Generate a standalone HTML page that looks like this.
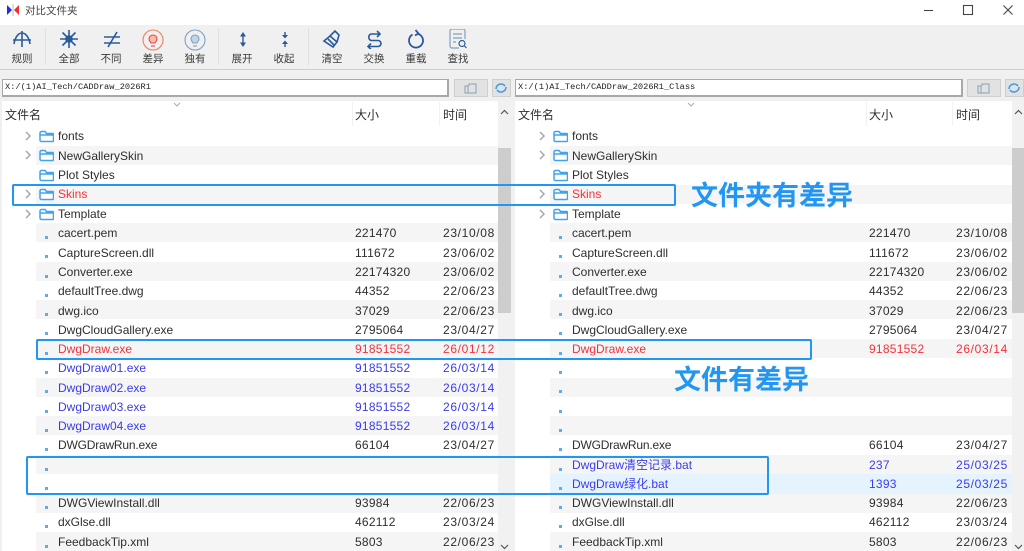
<!DOCTYPE html>
<html><head><meta charset="utf-8"><title>对比文件夹</title>
<style>
html,body{margin:0;padding:0;background:#fff}
body{width:1024px;height:551px;overflow:hidden;position:relative;font-family:"Liberation Sans","Noto Sans CJK SC",sans-serif;font-size:12px;color:#2e2e2e;filter:blur(.3px)}
div,span,svg{position:absolute}
.tb{left:0;top:25px;width:1024px;height:44px;background:#f0f0f0;border-bottom:1px solid #cfcfcf}
.l{top:51.500px;width:40px;text-align:center;font-size:10.5px;color:#3a3a3a;line-height:14px}
.sep{top:28px;width:1px;height:37px;background:#e0e0e0}
.ic{top:29px;width:20px;height:20px;fill:none;stroke:#2a5a9a;stroke-width:1.6}
.bar{left:0;top:70px;width:1024px;height:31px;background:#f0f0f0}
.in{top:79px;height:15px;background:#fff;border:1px solid #a8a8a8;border-right-width:2px;border-bottom-width:2px;font:8.7px/15px "Liberation Mono",monospace;color:#222;padding-left:2px;white-space:nowrap;overflow:hidden}
.b1{top:79px;width:32px;height:16px;background:#e2e2e2;border:1px solid #cfcfcf}
.b2{top:79px;width:17px;height:16px;background:#e2e2e2;border:1px solid #cfcfcf}
.h{top:107px;line-height:16px;font-size:12px;color:#2e2e2e}
.st{height:19.3px;background:#f5f5f5}
.t{line-height:16px;white-space:nowrap;font-size:12px;color:#2e2e2e}
.t[style*="left:355px"],.t[style*="left:869px"]{letter-spacing:.25px}
.t[style*="left:443px"],.t[style*="left:956px"]{letter-spacing:.65px}
.t.r{color:#f5303a}.t.b{color:#3a3af0}
.d{width:3px;height:3px;margin-top:.5px;background:#5aaeee}
.f{width:15px;height:13px;fill:#fff;stroke:#43a3ea;stroke-width:1.5}
.c{width:7px;height:10px;fill:none;stroke:#a8a8a8;stroke-width:1.5}
.box{border:2px solid #2196f3;border-radius:2px;box-sizing:border-box}
.big{font-weight:bold;font-size:27px;color:#2196f3;line-height:30px;white-space:nowrap}
.sb{top:101px;width:17px;height:450px;background:#f1f1f1}
.th{top:148px;height:165px;background:#cdcdcd}
</style></head><body>
<svg style="left:6px;top:3px;width:14px;height:14px" viewBox="0 0 14 14"><path d="M1 2l5 5-5 5z" fill="#1f2fe0"/><path d="M13 2L8 7l5 5z" fill="#ef3030"/><path d="M7 1v12" stroke="#bbb" stroke-width="1"/></svg>
<div style="left:25px;top:4px;font-size:10.5px;line-height:14px;color:#444">对比文件夹</div>
<svg style="left:917px;top:3px;width:100px;height:14px" viewBox="0 0 100 14" fill="none" stroke="#444" stroke-width="1.1"><path d="M7 7.500h9"/><rect x="46.500" y="2.500" width="9" height="9"/><path d="M86.500 2.500l9 9M95.500 2.500l-9 9"/></svg>

<div class="tb"></div>
<svg class="ic" style="left:12px" viewBox="0 0 20 20"><path d="M10 2v16M2 15C3 8 6.500 4 10 4s7 4 8 11M1 11h18"/></svg>
<svg class="ic" style="left:59px" viewBox="0 0 20 20"><path d="M10 1v18M1 10h18M3.500 3.500l13 13M16.500 3.500l-13 13"/><circle cx="10" cy="10" r="3" fill="#2a5a9a"/></svg>
<svg class="ic" style="left:102px" viewBox="0 0 20 20"><path d="M2 8h16M2 14h16M15 3L6 18"/></svg>
<svg class="ic" style="left:141px;top:27.500px;width:24px;height:24px;stroke:#f0805a;stroke-width:1.1" viewBox="0 0 24 24"><circle cx="12" cy="12" r="10"/><path d="M8 11a4 4 0 1 1 8 0c0 2-2 3-2 4h-4c0-1-2-2-2-4z" fill="#f7bdaa" stroke="#ee4444"/><path d="M10 18h4" stroke="#ee4444"/></svg>
<svg class="ic" style="left:183px;top:27.500px;width:24px;height:24px;stroke:#7f9fc4;stroke-width:1.1" viewBox="0 0 24 24"><circle cx="12" cy="12" r="10"/><path d="M8 11a4 4 0 1 1 8 0c0 2-2 3-2 4h-4c0-1-2-2-2-4z" fill="#c3d3e8"/><path d="M10 18h4"/></svg>
<svg class="ic" style="left:233px" viewBox="0 0 20 20"><path d="M10 6v9" stroke-width="1.400"/><path d="M7 7.500L10 3l3 4.500zM7 13.500l3 4.500 3-4.500z" fill="#2a5a9a" stroke="none"/></svg>
<svg class="ic" style="left:275px" viewBox="0 0 20 20"><path d="M10 3v3M10 15v3" stroke-width="1.400"/><path d="M7 6l3 3.500L13 6zM7 15l3-3.500L13 15z" fill="#2a5a9a" stroke="none"/></svg>
<svg class="ic" style="left:322px" viewBox="0 0 20 20"><path d="M2 12l6-5 7 6-4 5z"/><path d="M8 7l5-5 4 4-2 7M6 10l6 6"/></svg>
<svg class="ic" style="left:364px" viewBox="0 0 20 20"><path d="M16 5H7a3.500 3.500 0 0 0 0 6.500h7a3 3 0 0 1 0 6H4M13 2l3 3-3 3M7 14.500l-3 3 3 3"/></svg>
<svg class="ic" style="left:406px;stroke-width:1.8" viewBox="0 0 20 20"><path d="M6.500 5.500a7 7 0 1 0 5-.8M9.500 1l3 3.500-3.500 2"/></svg>
<svg class="ic" style="left:448px;stroke:#7f9fc0;stroke-width:1.200" viewBox="0 0 20 20"><path d="M11 19H4a2 2 0 0 1-2-2V2a2 2 0 0 1 2-2h11a2 2 0 0 1 2 2v8M5 5h9M5 9h9M5 13h3"/><circle cx="14" cy="14.500" r="3" stroke="#2a5a9a"/><path d="M16.500 17l2 2" stroke="#2a5a9a"/></svg>
<div class="sep" style="left:45px"></div><div class="sep" style="left:218px"></div><div class="sep" style="left:308px"></div>
<div class="l" style="left:2px">规则</div><div class="l" style="left:49px">全部</div><div class="l" style="left:91px">不同</div><div class="l" style="left:133px">差异</div><div class="l" style="left:175px">独有</div><div class="l" style="left:222px">展开</div><div class="l" style="left:264px">收起</div><div class="l" style="left:312px">清空</div><div class="l" style="left:354px">交换</div><div class="l" style="left:396px">重载</div><div class="l" style="left:438px">查找</div>

<div class="bar"></div>
<div class="in" style="left:2px;width:442px">X:/(1)AI_Tech/CADDraw_2026R1</div>
<div class="b1" style="left:454px"></div>
<svg style="left:464px;top:82px;width:14px;height:12px" viewBox="0 0 14 12" fill="none" stroke="#8aa0b5"><path d="M1 4h3v7H1zM4 11h8V2H5v2"/></svg>
<div class="b2" style="left:492px"></div>
<svg style="left:494px;top:81px;width:14px;height:14px" viewBox="0 0 14 14" fill="none" stroke="#3f9be8" stroke-width="1.6"><path d="M2 8a5 5 0 0 1 9-3M12 6a5 5 0 0 1-9 3"/></svg>
<div class="in" style="left:515px;width:443px">X:/(1)AI_Tech/CADDraw_2026R1_Class</div>
<div class="b1" style="left:967px"></div>
<svg style="left:977px;top:82px;width:14px;height:12px" viewBox="0 0 14 12" fill="none" stroke="#8aa0b5"><path d="M1 4h3v7H1zM4 11h8V2H5v2"/></svg>
<div class="b2" style="left:1005px"></div>
<svg style="left:1007px;top:81px;width:14px;height:14px" viewBox="0 0 14 14" fill="none" stroke="#3f9be8" stroke-width="1.6"><path d="M2 8a5 5 0 0 1 9-3M12 6a5 5 0 0 1-9 3"/></svg>

<div style="left:0;top:101px;width:2px;height:450px;background:#f0f0f0"></div>
<div class="h" style="left:5px">文件名</div><div class="h" style="left:355px">大小</div><div class="h" style="left:443px">时间</div>
<div class="h" style="left:518px">文件名</div><div class="h" style="left:869px">大小</div><div class="h" style="left:956px">时间</div>
<div style="left:352px;top:102px;width:1px;height:24px;background:#f2f2f2"></div><div style="left:439px;top:102px;width:1px;height:24px;background:#f2f2f2"></div>
<div style="left:866px;top:102px;width:1px;height:24px;background:#f2f2f2"></div><div style="left:952px;top:102px;width:1px;height:24px;background:#f2f2f2"></div>
<svg style="left:173px;top:102px;width:8px;height:5px" viewBox="0 0 8 5" fill="none" stroke="#aaa"><path d="M1 1l3 3 3-3"/></svg>
<svg style="left:687px;top:102px;width:8px;height:5px" viewBox="0 0 8 5" fill="none" stroke="#aaa"><path d="M1 1l3 3 3-3"/></svg>

<!-- stripes -->
<div class="st" style="left:36px;top:145.500px;width:462px"></div><div class="st" style="left:550px;top:145.500px;width:462px"></div>
<div class="st" style="left:36px;top:184.500px;width:462px"></div><div class="st" style="left:550px;top:184.500px;width:462px"></div>
<div class="st" style="left:36px;top:223px;width:462px"></div><div class="st" style="left:550px;top:223px;width:462px"></div>
<div class="st" style="left:36px;top:261.500px;width:462px"></div><div class="st" style="left:550px;top:261.500px;width:462px"></div>
<div class="st" style="left:36px;top:300px;width:462px"></div><div class="st" style="left:550px;top:300px;width:462px"></div>
<div class="st" style="left:36px;top:339px;width:462px"></div><div class="st" style="left:550px;top:339px;width:462px"></div>
<div class="st" style="left:36px;top:377.500px;width:462px"></div><div class="st" style="left:550px;top:377.500px;width:462px"></div>
<div class="st" style="left:36px;top:416px;width:462px"></div><div class="st" style="left:550px;top:416px;width:462px"></div>
<div class="st" style="left:36px;top:455px;width:462px"></div><div class="st" style="left:550px;top:455px;width:462px"></div>
<div class="st" style="left:550px;top:474.300px;width:462px;background:#e5f3ff"></div>
<div class="st" style="left:36px;top:493.500px;width:462px"></div><div class="st" style="left:550px;top:493.500px;width:462px"></div>
<div class="st" style="left:36px;top:532px;width:462px"></div><div class="st" style="left:550px;top:532px;width:462px"></div>

<!-- scrollbars -->
<div class="sb" style="left:498px"></div><div class="th" style="left:498px;width:12.500px"></div>
<div class="sb" style="left:1012px;width:12px"></div><div class="th" style="left:1012px;width:12px"></div>
<svg style="left:500px;top:109px;width:9px;height:6px" viewBox="0 0 9 6" fill="none" stroke="#555" stroke-width="1.2"><path d="M1 5l3.500-3.500L8 5"/></svg>
<svg style="left:1014px;top:109px;width:9px;height:6px" viewBox="0 0 9 6" fill="none" stroke="#555" stroke-width="1.2"><path d="M1 5l3.500-3.500L8 5"/></svg>
<svg style="left:500px;top:544px;width:9px;height:6px" viewBox="0 0 9 6" fill="none" stroke="#555" stroke-width="1.2"><path d="M1 1l3.500 3.500L8 1"/></svg>
<svg style="left:1014px;top:544px;width:9px;height:6px" viewBox="0 0 9 6" fill="none" stroke="#555" stroke-width="1.2"><path d="M1 1l3.500 3.500L8 1"/></svg>

<!-- folders left -->
<svg class="c" style="left:24.500px;top:131px" viewBox="0 0 7 10"><path d="M1 1l4 4-4 4"/></svg>
<svg class="c" style="left:24.500px;top:150px" viewBox="0 0 7 10"><path d="M1 1l4 4-4 4"/></svg>
<svg class="c" style="left:24.500px;top:189px" viewBox="0 0 7 10"><path d="M1 1l4 4-4 4"/></svg>
<svg class="c" style="left:24.500px;top:209px" viewBox="0 0 7 10"><path d="M1 1l4 4-4 4"/></svg>
<svg class="f" style="left:39px;top:129.500px" viewBox="0 0 15 13"><path d="M1 3a1.500 1.500 0 0 1 1.500-1.500h3.500l1.500 2h6a1 1 0 0 1 1 1v6a1 1 0 0 1-1 1h-11a1.500 1.500 0 0 1-1.500-1.500zM1 5h13"/></svg>
<svg class="f" style="left:39px;top:149px" viewBox="0 0 15 13"><path d="M1 3a1.500 1.500 0 0 1 1.500-1.500h3.500l1.500 2h6a1 1 0 0 1 1 1v6a1 1 0 0 1-1 1h-11a1.500 1.500 0 0 1-1.500-1.500zM1 5h13"/></svg>
<svg class="f" style="left:39px;top:168.500px" viewBox="0 0 15 13"><path d="M1 3a1.500 1.500 0 0 1 1.500-1.500h3.500l1.500 2h6a1 1 0 0 1 1 1v6a1 1 0 0 1-1 1h-11a1.500 1.500 0 0 1-1.500-1.500zM1 5h13"/></svg>
<svg class="f" style="left:39px;top:187.500px" viewBox="0 0 15 13"><path d="M1 3a1.500 1.500 0 0 1 1.500-1.500h3.500l1.500 2h6a1 1 0 0 1 1 1v6a1 1 0 0 1-1 1h-11a1.500 1.500 0 0 1-1.500-1.500zM1 5h13"/></svg>
<svg class="f" style="left:39px;top:207.500px" viewBox="0 0 15 13"><path d="M1 3a1.500 1.500 0 0 1 1.500-1.500h3.500l1.500 2h6a1 1 0 0 1 1 1v6a1 1 0 0 1-1 1h-11a1.500 1.500 0 0 1-1.500-1.500zM1 5h13"/></svg>
<!-- folders right -->
<svg class="c" style="left:538.500px;top:131px" viewBox="0 0 7 10"><path d="M1 1l4 4-4 4"/></svg>
<svg class="c" style="left:538.500px;top:150px" viewBox="0 0 7 10"><path d="M1 1l4 4-4 4"/></svg>
<svg class="c" style="left:538.500px;top:189px" viewBox="0 0 7 10"><path d="M1 1l4 4-4 4"/></svg>
<svg class="c" style="left:538.500px;top:209px" viewBox="0 0 7 10"><path d="M1 1l4 4-4 4"/></svg>
<svg class="f" style="left:553px;top:129.500px" viewBox="0 0 15 13"><path d="M1 3a1.500 1.500 0 0 1 1.500-1.500h3.500l1.500 2h6a1 1 0 0 1 1 1v6a1 1 0 0 1-1 1h-11a1.500 1.500 0 0 1-1.500-1.500zM1 5h13"/></svg>
<svg class="f" style="left:553px;top:149px" viewBox="0 0 15 13"><path d="M1 3a1.500 1.500 0 0 1 1.500-1.500h3.500l1.500 2h6a1 1 0 0 1 1 1v6a1 1 0 0 1-1 1h-11a1.500 1.500 0 0 1-1.500-1.500zM1 5h13"/></svg>
<svg class="f" style="left:553px;top:168.500px" viewBox="0 0 15 13"><path d="M1 3a1.500 1.500 0 0 1 1.500-1.500h3.500l1.500 2h6a1 1 0 0 1 1 1v6a1 1 0 0 1-1 1h-11a1.500 1.500 0 0 1-1.500-1.500zM1 5h13"/></svg>
<svg class="f" style="left:553px;top:187.500px" viewBox="0 0 15 13"><path d="M1 3a1.500 1.500 0 0 1 1.500-1.500h3.500l1.500 2h6a1 1 0 0 1 1 1v6a1 1 0 0 1-1 1h-11a1.500 1.500 0 0 1-1.500-1.500zM1 5h13"/></svg>
<svg class="f" style="left:553px;top:207.500px" viewBox="0 0 15 13"><path d="M1 3a1.500 1.500 0 0 1 1.500-1.500h3.500l1.500 2h6a1 1 0 0 1 1 1v6a1 1 0 0 1-1 1h-11a1.500 1.500 0 0 1-1.500-1.500zM1 5h13"/></svg>

<!-- left names -->
<div class="t" style="left:58px;top:128px">fonts</div>
<div class="t" style="left:58px;top:147.500px">NewGallerySkin</div>
<div class="t" style="left:58px;top:167px">Plot Styles</div>
<div class="t r" style="left:58px;top:186px">Skins</div>
<div class="t" style="left:58px;top:206px">Template</div>
<div class="t" style="left:58px;top:225px">cacert.pem</div><div class="t" style="left:355px;top:225px">221470</div><div class="t" style="left:443px;top:225px">23/10/08</div>
<div class="t" style="left:58px;top:244.500px">CaptureScreen.dll</div><div class="t" style="left:355px;top:244.500px">111672</div><div class="t" style="left:443px;top:244.500px">23/06/02</div>
<div class="t" style="left:58px;top:264px">Converter.exe</div><div class="t" style="left:355px;top:264px">22174320</div><div class="t" style="left:443px;top:264px">23/06/02</div>
<div class="t" style="left:58px;top:283px">defaultTree.dwg</div><div class="t" style="left:355px;top:283px">44352</div><div class="t" style="left:443px;top:283px">22/06/23</div>
<div class="t" style="left:58px;top:302.500px">dwg.ico</div><div class="t" style="left:355px;top:302.500px">37029</div><div class="t" style="left:443px;top:302.500px">22/06/23</div>
<div class="t" style="left:58px;top:321.500px">DwgCloudGallery.exe</div><div class="t" style="left:355px;top:321.500px">2795064</div><div class="t" style="left:443px;top:321.500px">23/04/27</div>
<div class="t r" style="left:58px;top:341px">DwgDraw.exe</div><div class="t r" style="left:355px;top:341px">91851552</div><div class="t r" style="left:443px;top:341px">26/01/12</div>
<div class="t b" style="left:58px;top:360px">DwgDraw01.exe</div><div class="t b" style="left:355px;top:360px">91851552</div><div class="t b" style="left:443px;top:360px">26/03/14</div>
<div class="t b" style="left:58px;top:379.500px">DwgDraw02.exe</div><div class="t b" style="left:355px;top:379.500px">91851552</div><div class="t b" style="left:443px;top:379.500px">26/03/14</div>
<div class="t b" style="left:58px;top:399px">DwgDraw03.exe</div><div class="t b" style="left:355px;top:399px">91851552</div><div class="t b" style="left:443px;top:399px">26/03/14</div>
<div class="t b" style="left:58px;top:418px">DwgDraw04.exe</div><div class="t b" style="left:355px;top:418px">91851552</div><div class="t b" style="left:443px;top:418px">26/03/14</div>
<div class="t" style="left:58px;top:437px;letter-spacing:-.2px">DWGDrawRun.exe</div><div class="t" style="left:355px;top:437px">66104</div><div class="t" style="left:443px;top:437px">23/04/27</div>
<div class="t" style="left:58px;top:495px">DWGViewInstall.dll</div><div class="t" style="left:355px;top:495px">93984</div><div class="t" style="left:443px;top:495px">22/06/23</div>
<div class="t" style="left:58px;top:514px">dxGlse.dll</div><div class="t" style="left:355px;top:514px">462112</div><div class="t" style="left:443px;top:514px">23/03/24</div>
<div class="t" style="left:58px;top:533.500px">FeedbackTip.xml</div><div class="t" style="left:355px;top:533.500px">5803</div><div class="t" style="left:443px;top:533.500px">22/06/23</div>

<!-- right names -->
<div class="t" style="left:572px;top:128px">fonts</div>
<div class="t" style="left:572px;top:147.500px">NewGallerySkin</div>
<div class="t" style="left:572px;top:167px">Plot Styles</div>
<div class="t r" style="left:572px;top:186px">Skins</div>
<div class="t" style="left:572px;top:206px">Template</div>
<div class="t" style="left:572px;top:225px">cacert.pem</div><div class="t" style="left:869px;top:225px">221470</div><div class="t" style="left:956px;top:225px">23/10/08</div>
<div class="t" style="left:572px;top:244.500px">CaptureScreen.dll</div><div class="t" style="left:869px;top:244.500px">111672</div><div class="t" style="left:956px;top:244.500px">23/06/02</div>
<div class="t" style="left:572px;top:264px">Converter.exe</div><div class="t" style="left:869px;top:264px">22174320</div><div class="t" style="left:956px;top:264px">23/06/02</div>
<div class="t" style="left:572px;top:283px">defaultTree.dwg</div><div class="t" style="left:869px;top:283px">44352</div><div class="t" style="left:956px;top:283px">22/06/23</div>
<div class="t" style="left:572px;top:302.500px">dwg.ico</div><div class="t" style="left:869px;top:302.500px">37029</div><div class="t" style="left:956px;top:302.500px">22/06/23</div>
<div class="t" style="left:572px;top:321.500px">DwgCloudGallery.exe</div><div class="t" style="left:869px;top:321.500px">2795064</div><div class="t" style="left:956px;top:321.500px">23/04/27</div>
<div class="t r" style="left:572px;top:341px">DwgDraw.exe</div><div class="t r" style="left:869px;top:341px">91851552</div><div class="t r" style="left:956px;top:341px">26/03/14</div>
<div class="t" style="left:572px;top:437px;letter-spacing:-.2px">DWGDrawRun.exe</div><div class="t" style="left:869px;top:437px">66104</div><div class="t" style="left:956px;top:437px">23/04/27</div>
<div class="t b" style="left:572px;top:456.500px">DwgDraw清空记录.bat</div><div class="t b" style="left:869px;top:456.500px">237</div><div class="t b" style="left:956px;top:456.500px">25/03/25</div>
<div class="t b" style="left:572px;top:476px">DwgDraw绿化.bat</div><div class="t b" style="left:869px;top:476px">1393</div><div class="t b" style="left:956px;top:476px">25/03/25</div>
<div class="t" style="left:572px;top:495px">DWGViewInstall.dll</div><div class="t" style="left:869px;top:495px">93984</div><div class="t" style="left:956px;top:495px">22/06/23</div>
<div class="t" style="left:572px;top:514px">dxGlse.dll</div><div class="t" style="left:869px;top:514px">462112</div><div class="t" style="left:956px;top:514px">23/03/24</div>
<div class="t" style="left:572px;top:533.500px">FeedbackTip.xml</div><div class="t" style="left:869px;top:533.500px">5803</div><div class="t" style="left:956px;top:533.500px">22/06/23</div>

<!-- dots left -->
<div class="d" style="left:45px;top:235px"></div><div class="d" style="left:45px;top:254px"></div><div class="d" style="left:45px;top:274px"></div><div class="d" style="left:45px;top:293px"></div><div class="d" style="left:45px;top:312px"></div><div class="d" style="left:45px;top:331px"></div><div class="d" style="left:45px;top:351px"></div><div class="d" style="left:45px;top:370px"></div><div class="d" style="left:45px;top:389px"></div><div class="d" style="left:45px;top:409px"></div><div class="d" style="left:45px;top:428px"></div><div class="d" style="left:45px;top:447px"></div><div class="d" style="left:45px;top:467px"></div><div class="d" style="left:45px;top:486px"></div><div class="d" style="left:45px;top:505px"></div><div class="d" style="left:45px;top:524px"></div><div class="d" style="left:45px;top:544px"></div>
<!-- dots right -->
<div class="d" style="left:559px;top:235px"></div><div class="d" style="left:559px;top:254px"></div><div class="d" style="left:559px;top:274px"></div><div class="d" style="left:559px;top:293px"></div><div class="d" style="left:559px;top:312px"></div><div class="d" style="left:559px;top:331px"></div><div class="d" style="left:559px;top:351px"></div><div class="d" style="left:559px;top:370px"></div><div class="d" style="left:559px;top:389px"></div><div class="d" style="left:559px;top:409px"></div><div class="d" style="left:559px;top:428px"></div><div class="d" style="left:559px;top:447px"></div><div class="d" style="left:559px;top:467px"></div><div class="d" style="left:559px;top:486px"></div><div class="d" style="left:559px;top:505px"></div><div class="d" style="left:559px;top:524px"></div><div class="d" style="left:559px;top:544px"></div>

<!-- annotations -->
<div class="box" style="left:12px;top:184px;width:664px;height:22px"></div>
<div class="box" style="left:36px;top:339px;width:776px;height:21px"></div>
<div class="box" style="left:26px;top:456px;width:743px;height:39px"></div>
<div class="big" style="left:691px;top:181px">文件夹有差异</div>
<div class="big" style="left:674px;top:365px">文件有差异</div>
</body></html>
